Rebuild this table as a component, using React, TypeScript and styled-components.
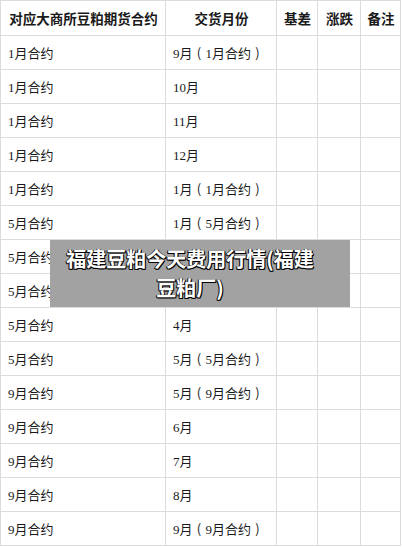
import styled, { createGlobalStyle } from "styled-components";

const GlobalStyle = createGlobalStyle`
  html, body {
    margin: 0;
    padding: 0;
    background: #fff;
  }
  body {
    font-family: "Liberation Serif", "Noto Sans CJK SC", serif;
    color: #222;
  }
`;

const Page = styled.div`
  position: relative;
  width: 402px;
  height: 547px;
  overflow: hidden;
`;

const Grid = styled.div`
  display: grid;
  grid-template-columns: 165px 111px 41px 43px 40px;
  width: 400px;
  border-left: 1px solid #dcdcdc;
  border-top: 1px solid #dcdcdc;
`;

const Row = styled.div`
  display: contents;
`;

const Cell = styled.div<{ $head?: boolean }>`
  display: flex;
  align-items: center;
  justify-content: ${(p) => (p.$head ? "center" : "flex-start")};
  height: ${(p) => (p.$head ? "35px" : "34px")};
  box-sizing: border-box;
  padding: 0 6px 0 7px;
  border-right: 1px solid #dcdcdc;
  border-bottom: 1px solid #dcdcdc;
  white-space: nowrap;
  font-size: ${(p) => (p.$head ? "13.5px" : "13px")};
  font-weight: ${(p) => (p.$head ? 700 : 400)};
  font-family: ${(p) =>
    p.$head
      ? `"Noto Sans CJK SC", sans-serif`
      : `"Liberation Serif", "Noto Sans CJK SC", serif`};
  color: #1a1a1a;
  overflow: hidden;
`;

/* full-width bracket with the glyph centred in its em box */
const Paren = styled.span`
  display: inline-block;
  width: 13px;
  text-align: center;
  font-family: "Noto Sans CJK SC", sans-serif;
`;

const Banner = styled.div`
  position: absolute;
  left: 50px;
  top: 240px;
  width: 300px;
  height: 67px;
  box-sizing: border-box;
  padding: 4px 30px 0 10px;
  background: #a2a2a2;
  color: #fff;
  font-family: "Noto Sans CJK SC", sans-serif;
  font-weight: 700;
  font-size: 20px;
  line-height: 29px;
  text-align: center;
  text-shadow: 1px 1px 0 #000, -1px 0 0 #222, 0 1px 0 #000, 1px 0 0 #333,
    -1px 1px 0 #111;
`;

const headers = ["对应大商所豆粕期货合约", "交货月份", "基差", "涨跌", "备注"];

const rows: [string, string, string?][] = [
  ["1月合约", "9月", "1月合约"],
  ["1月合约", "10月"],
  ["1月合约", "11月"],
  ["1月合约", "12月"],
  ["1月合约", "1月", "1月合约"],
  ["5月合约", "1月", "5月合约"],
  ["5月合约", "2月"],
  ["5月合约", "3月"],
  ["5月合约", "4月"],
  ["5月合约", "5月", "5月合约"],
  ["9月合约", "5月", "9月合约"],
  ["9月合约", "6月"],
  ["9月合约", "7月"],
  ["9月合约", "8月"],
  ["9月合约", "9月", "9月合约"],
];

export default function App() {
  return (
    <>
      <GlobalStyle />
      <Page>
        <Grid>
          <Row>
            {headers.map((h) => (
              <Cell key={h} $head>
                {h}
              </Cell>
            ))}
          </Row>
          {rows.map(([contract, month, note], i) => (
            <Row key={i}>
              <Cell>{contract}</Cell>
              <Cell>
                {month}
                {note && (
                  <>
                    <Paren>(</Paren>
                    {note}
                    <Paren>)</Paren>
                  </>
                )}
              </Cell>
              <Cell />
              <Cell />
              <Cell />
            </Row>
          ))}
        </Grid>
        <Banner>福建豆粕今天费用行情(福建豆粕厂)</Banner>
      </Page>
    </>
  );
}
